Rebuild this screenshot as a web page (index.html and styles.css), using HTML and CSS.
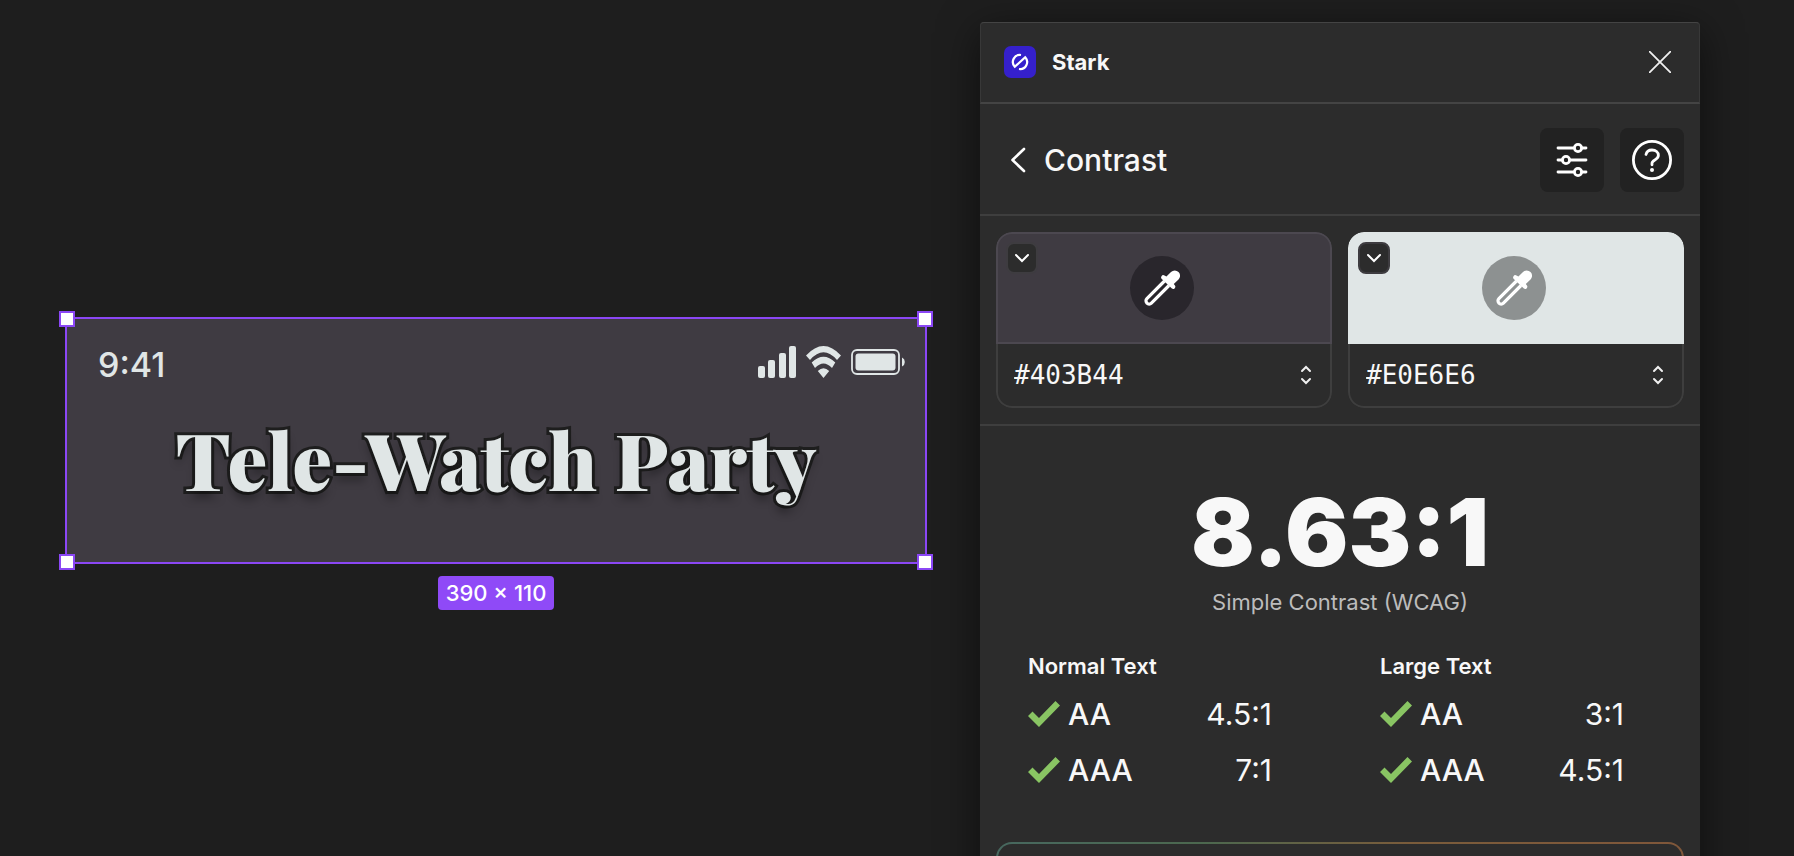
FILE: index.html
```html
<!DOCTYPE html>
<html lang="en">
<head>
<meta charset="utf-8">
<title>Stark – Contrast</title>
<link rel="stylesheet" href="styles.css">
</head>
<body>
<svg class="defs" aria-hidden="true">
  <symbol id="dropper" viewBox="0 0 36 36">
    <path d="M20.5 11 2.9 28.6a3 3 0 0 0 4.500 4.500L25 15.500" fill="none" stroke="#fff" stroke-width="3.200"/>
    <path d="M17.500 6.200a2.200 2.200 0 0 1 3-.8l1.900 1.200 4.600-4.600a5.300 5.300 0 0 1 7.500 7.500l-4.700 4.600 1.300 1.700a2.200 2.200 0 0 1-3.200 2.800L17.800 9a2.200 2.200 0 0 1-.3-2.800z" fill="#fff"/>
  </symbol>
  <symbol id="down" viewBox="0 0 16 10">
    <path d="m2 2 6 6 6-6" fill="none" stroke="#fff" stroke-width="2" stroke-linecap="round"/>
  </symbol>
  <symbol id="stepper" viewBox="0 0 12 20">
    <path d="m2 6 4-4 4 4M2 14l4 4 4-4" fill="none" stroke="#f0f0f0" stroke-width="2" stroke-linecap="round"/>
  </symbol>
  <symbol id="check" viewBox="0 0 32 26">
    <path d="M0 15 4.500 10.500 11 17 27.500 0 32 4.500 11 26z" fill="#89c563"/>
  </symbol>
</svg>
<div class="workspace">
  <main class="canvas">
    <section class="frame">
      <span class="handle tl"></span><span class="handle tr"></span>
      <span class="handle bl"></span><span class="handle br"></span>
      <div class="status">
        <span class="time">9:41</span>
        <div class="indicators">
          <svg width="38" height="32" viewBox="0 0 38 32" fill="#e0e6e6"><rect y="20" width="7" height="12" rx="2"/><rect x="10" y="14" width="7" height="18" rx="2"/><rect x="21" y="7" width="7" height="25" rx="2"/><rect x="31" width="7" height="32" rx="2"/></svg>
          <svg width="35" height="32" viewBox="0 0 35 32" fill="#e0e6e6"><path d="M0 9.500Q17.500-9.500 35 9.500L31 14Q17.500-1.400 4 14zM5.700 16.500Q17.500 5 29.300 16.500L26 22Q17.500 13 9 22zM11.800 25Q17.500 19.500 23.200 25L17.500 32z"/></svg>
          <svg width="56" height="26" viewBox="0 0 56 26" fill="#e0e6e6"><rect x="1" y="1" width="47" height="24" rx="5" fill="none" stroke="#e0e6e6" stroke-width="1.800"/><rect x="4.500" y="4.500" width="40" height="17" rx="3"/><path d="M51 8.500a5 5 0 0 1 0 9z"/></svg>
        </div>
      </div>
      <h1 class="headline">Tele-Watch Party</h1>
    </section>
    <span class="size">390 × 110</span>
  </main>

  <aside class="panel">
    <header class="titlebar">
      <svg class="logo" viewBox="0 0 32 32"><rect width="32" height="32" rx="7" fill="#3520cc"/><path d="M17 9A7 7 0 0 0 10.800 20.700L21 11.500M15 23A7 7 0 0 0 21.200 11.300L12.500 19.200" fill="none" stroke="#fff" stroke-width="2.200"/></svg>
      <h2 class="brand">Stark</h2>
      <button class="close" aria-label="Close"><svg width="22" height="22" viewBox="0 0 22 22"><path d="M0 0 22 22M22 0 0 22" stroke="#f0f0f0" stroke-width="1.800"/></svg></button>
    </header>
    <nav class="toolbar">
      <button class="back"><svg width="16" height="26" viewBox="0 0 16 26"><path d="M14 2 2.500 13 14 24" fill="none" stroke="#fff" stroke-width="2.600" stroke-linecap="round" stroke-linejoin="round"/></svg>Contrast</button>
      <button class="tool" aria-label="Settings"><svg width="32" height="36" viewBox="0 0 32 36" fill="none" stroke="#fff" stroke-width="2.800" stroke-linecap="round"><path d="M2 6h15M26 6h4M2 18h4M14 18h16M2 30h15M26 30h4"/><circle cx="22" cy="6" r="3.600"/><circle cx="10" cy="18" r="3.600"/><circle cx="22" cy="30" r="3.600"/></svg></button>
      <button class="tool" aria-label="Help"><svg width="40" height="40" viewBox="0 0 40 40" fill="none" stroke="#fff" stroke-width="2.800" stroke-linecap="round"><circle cx="20" cy="20" r="18.600"/><path d="M14 14.500c.6-3 3-4.500 6-4.500 3.800 0 6.400 2.200 6.400 5.300 0 5-6.400 4.200-6.400 8v1.500"/><circle cx="20" cy="30" r="2" fill="#fff" stroke="none"/></svg></button>
    </nav>
    <section class="colors">
      <div class="card dark">
        <div class="swatch">
          <button class="menu" aria-label="Foreground options"><svg width="16" height="10"><use href="#down"/></svg></button>
          <button class="pick" aria-label="Pick foreground"><svg width="36" height="36"><use href="#dropper"/></svg></button>
        </div>
        <div class="field">
          <input class="hex" aria-label="Foreground color" value="#403B44">
          <button class="step" aria-label="Adjust foreground"><svg width="12" height="20"><use href="#stepper"/></svg></button>
        </div>
      </div>
      <div class="card light">
        <div class="swatch">
          <button class="menu" aria-label="Background options"><svg width="16" height="10"><use href="#down"/></svg></button>
          <button class="pick" aria-label="Pick background"><svg width="36" height="36"><use href="#dropper"/></svg></button>
        </div>
        <div class="field">
          <input class="hex" aria-label="Background color" value="#E0E6E6">
          <button class="step" aria-label="Adjust background"><svg width="12" height="20"><use href="#stepper"/></svg></button>
        </div>
      </div>
    </section>
    <section class="result">
      <p class="ratio">8.63:1</p>
      <p class="method">Simple Contrast (WCAG)</p>
      <div class="levels">
        <table class="level">
          <caption>Normal Text</caption>
          <tr><th scope="row"><span class="grade"><svg width="32" height="26"><use href="#check"/></svg>AA</span></th><td>4.5:1</td></tr>
          <tr><th scope="row"><span class="grade"><svg width="32" height="26"><use href="#check"/></svg>AAA</span></th><td>7:1</td></tr>
        </table>
        <table class="level">
          <caption>Large Text</caption>
          <tr><th scope="row"><span class="grade"><svg width="32" height="26"><use href="#check"/></svg>AA</span></th><td>3:1</td></tr>
          <tr><th scope="row"><span class="grade"><svg width="32" height="26"><use href="#check"/></svg>AAA</span></th><td>4.5:1</td></tr>
        </table>
      </div>
    </section>
    <section class="suggestions"></section>
  </aside>
</div>
</body>
</html>
```
FILE: styles.css
```css
* { box-sizing: border-box; }
body { margin: 0; background: #1e1e1e; color: #f8f8f8; font-family: Inter, "Liberation Sans", sans-serif; }
button { display: flex; align-items: center; justify-content: center; padding: 0; border: 0; background: none; color: inherit; font: inherit; }
h1, h2, p { margin: 0; }
svg { display: block; flex: none; }
.defs { display: none; }

.workspace { display: grid; grid-template-columns: 862fr 720fr; gap: 53px; height: 100vh; padding: 22px 94px 0 65px; overflow: hidden; }

.canvas { display: flex; flex-direction: column; align-items: center; gap: 12px; padding-top: 295px; }
.frame { position: relative; width: 100%; padding: 27px 0 53px; border: 2px solid #8b47f5; background: #3f3b42; color: #e0e6e6; }
.handle { position: absolute; width: 16px; height: 16px; border: 2px solid #8b47f5; background: #fff; }
.tl { top: -8px; left: -8px; }
.tr { top: -8px; right: -8px; }
.bl { bottom: -8px; left: -8px; }
.br { bottom: -8px; right: -8px; }
.status { display: flex; justify-content: space-between; align-items: flex-start; height: 40px; padding: 0 18px 0 31px; }
.time { font-size: 34px; line-height: 38px; font-weight: 500; }
.indicators { display: flex; align-items: center; gap: 10px; }
.headline { margin-top: 23px; text-align: center; font: 900 79px/100px "Playfair Display", "Liberation Serif", serif; -webkit-text-stroke: 6px #1e1e1e; paint-order: stroke fill; text-shadow: 0 8px 8px rgba(0, 0, 0, .3); white-space: nowrap; }
.size { padding: 0 8px; border-radius: 4px; background: #8f4af7; color: #fff; font-size: 22px; line-height: 34px; font-weight: 500; }

.panel { display: flex; flex-direction: column; min-width: 0; border-radius: 4px 4px 0 0; background: #2c2c2c; box-shadow: 0 10px 40px rgba(0, 0, 0, .55); }
.titlebar { display: flex; align-items: center; flex: none; height: 82px; padding: 0 28px 2px 23px; border: 1px solid #383838; border-top-color: #444; border-bottom: 2px solid #444; border-radius: 4px 4px 0 0; }
.logo { width: 32px; height: 32px; }
.brand { margin-left: 16px; font-size: 22px; font-weight: 700; }
.close { margin-left: auto; }

.toolbar { display: flex; align-items: center; flex: none; gap: 16px; height: 112px; padding: 2px 16px 0 30px; border-bottom: 2px solid #3e3e3e; }
.back { gap: 18px; margin-right: auto; font-size: 30px; font-weight: 500; }
.tool { width: 64px; height: 64px; border-radius: 8px; background: #222; }

.colors { display: grid; grid-template-columns: 1fr 1fr; flex: none; gap: 16px; padding: 16px; border-bottom: 2px solid #3e3e3e; }
.card { overflow: hidden; border-radius: 16px; }
.swatch { display: grid; grid-template-columns: 32px 1fr 32px; align-items: center; height: 112px; padding: 8px 12px 8px 8px; border: 2px solid #4c4850; border-radius: 16px 16px 0 0; background: #3f3b42; }
.light .swatch { border-color: #e0e6e6; background: #e0e6e6; }
.menu { align-self: start; width: 32px; height: 32px; border: 2px solid #3e3c40; border-radius: 8px; background: #2c2c2c; }
.pick { justify-self: center; width: 64px; height: 64px; border-radius: 50%; background: #29262c; }
.light .pick { background: #8d9191; }
.field { display: flex; align-items: center; height: 64px; padding: 0 18px 0 16px; border: 2px solid #3e3e3e; border-top: 0; border-radius: 0 0 16px 16px; }
.hex { flex: 1; min-width: 0; padding: 0; border: 0; outline: 0; background: none; color: inherit; font: 26px "DejaVu Sans Mono", monospace; }

.result { display: flex; flex-direction: column; flex: none; padding: 60px 16px 44px; }
.ratio { text-align: center; font-size: 94px; line-height: 92px; font-weight: 900; }
.method { margin-top: 8px; color: #bcbcbc; text-align: center; font-size: 22px; line-height: 32px; }
.levels { display: grid; grid-template-columns: 1fr 1fr; gap: 16px; margin-top: 32px; }
.level { justify-self: stretch; margin: 0 60px 0 32px; border-collapse: collapse; font-size: 30px; font-weight: 500; }
.level caption { padding-bottom: 4px; text-align: left; font-size: 22px; line-height: 32px; font-weight: 600; }
.level th, .level td { height: 56px; padding: 0; font-weight: 500; }
.level td { text-align: right; font-weight: 400; }
.grade { display: flex; align-items: center; gap: 8px; }

.suggestions { flex: none; height: 120px; margin: 0 16px; border: 2px solid transparent; border-radius: 16px; background: linear-gradient(#2c2c2c, #2c2c2c) padding-box, linear-gradient(90deg, #47685f, #4c684f 30%, #7a5c3b 60%, #80573a) border-box; }
```
